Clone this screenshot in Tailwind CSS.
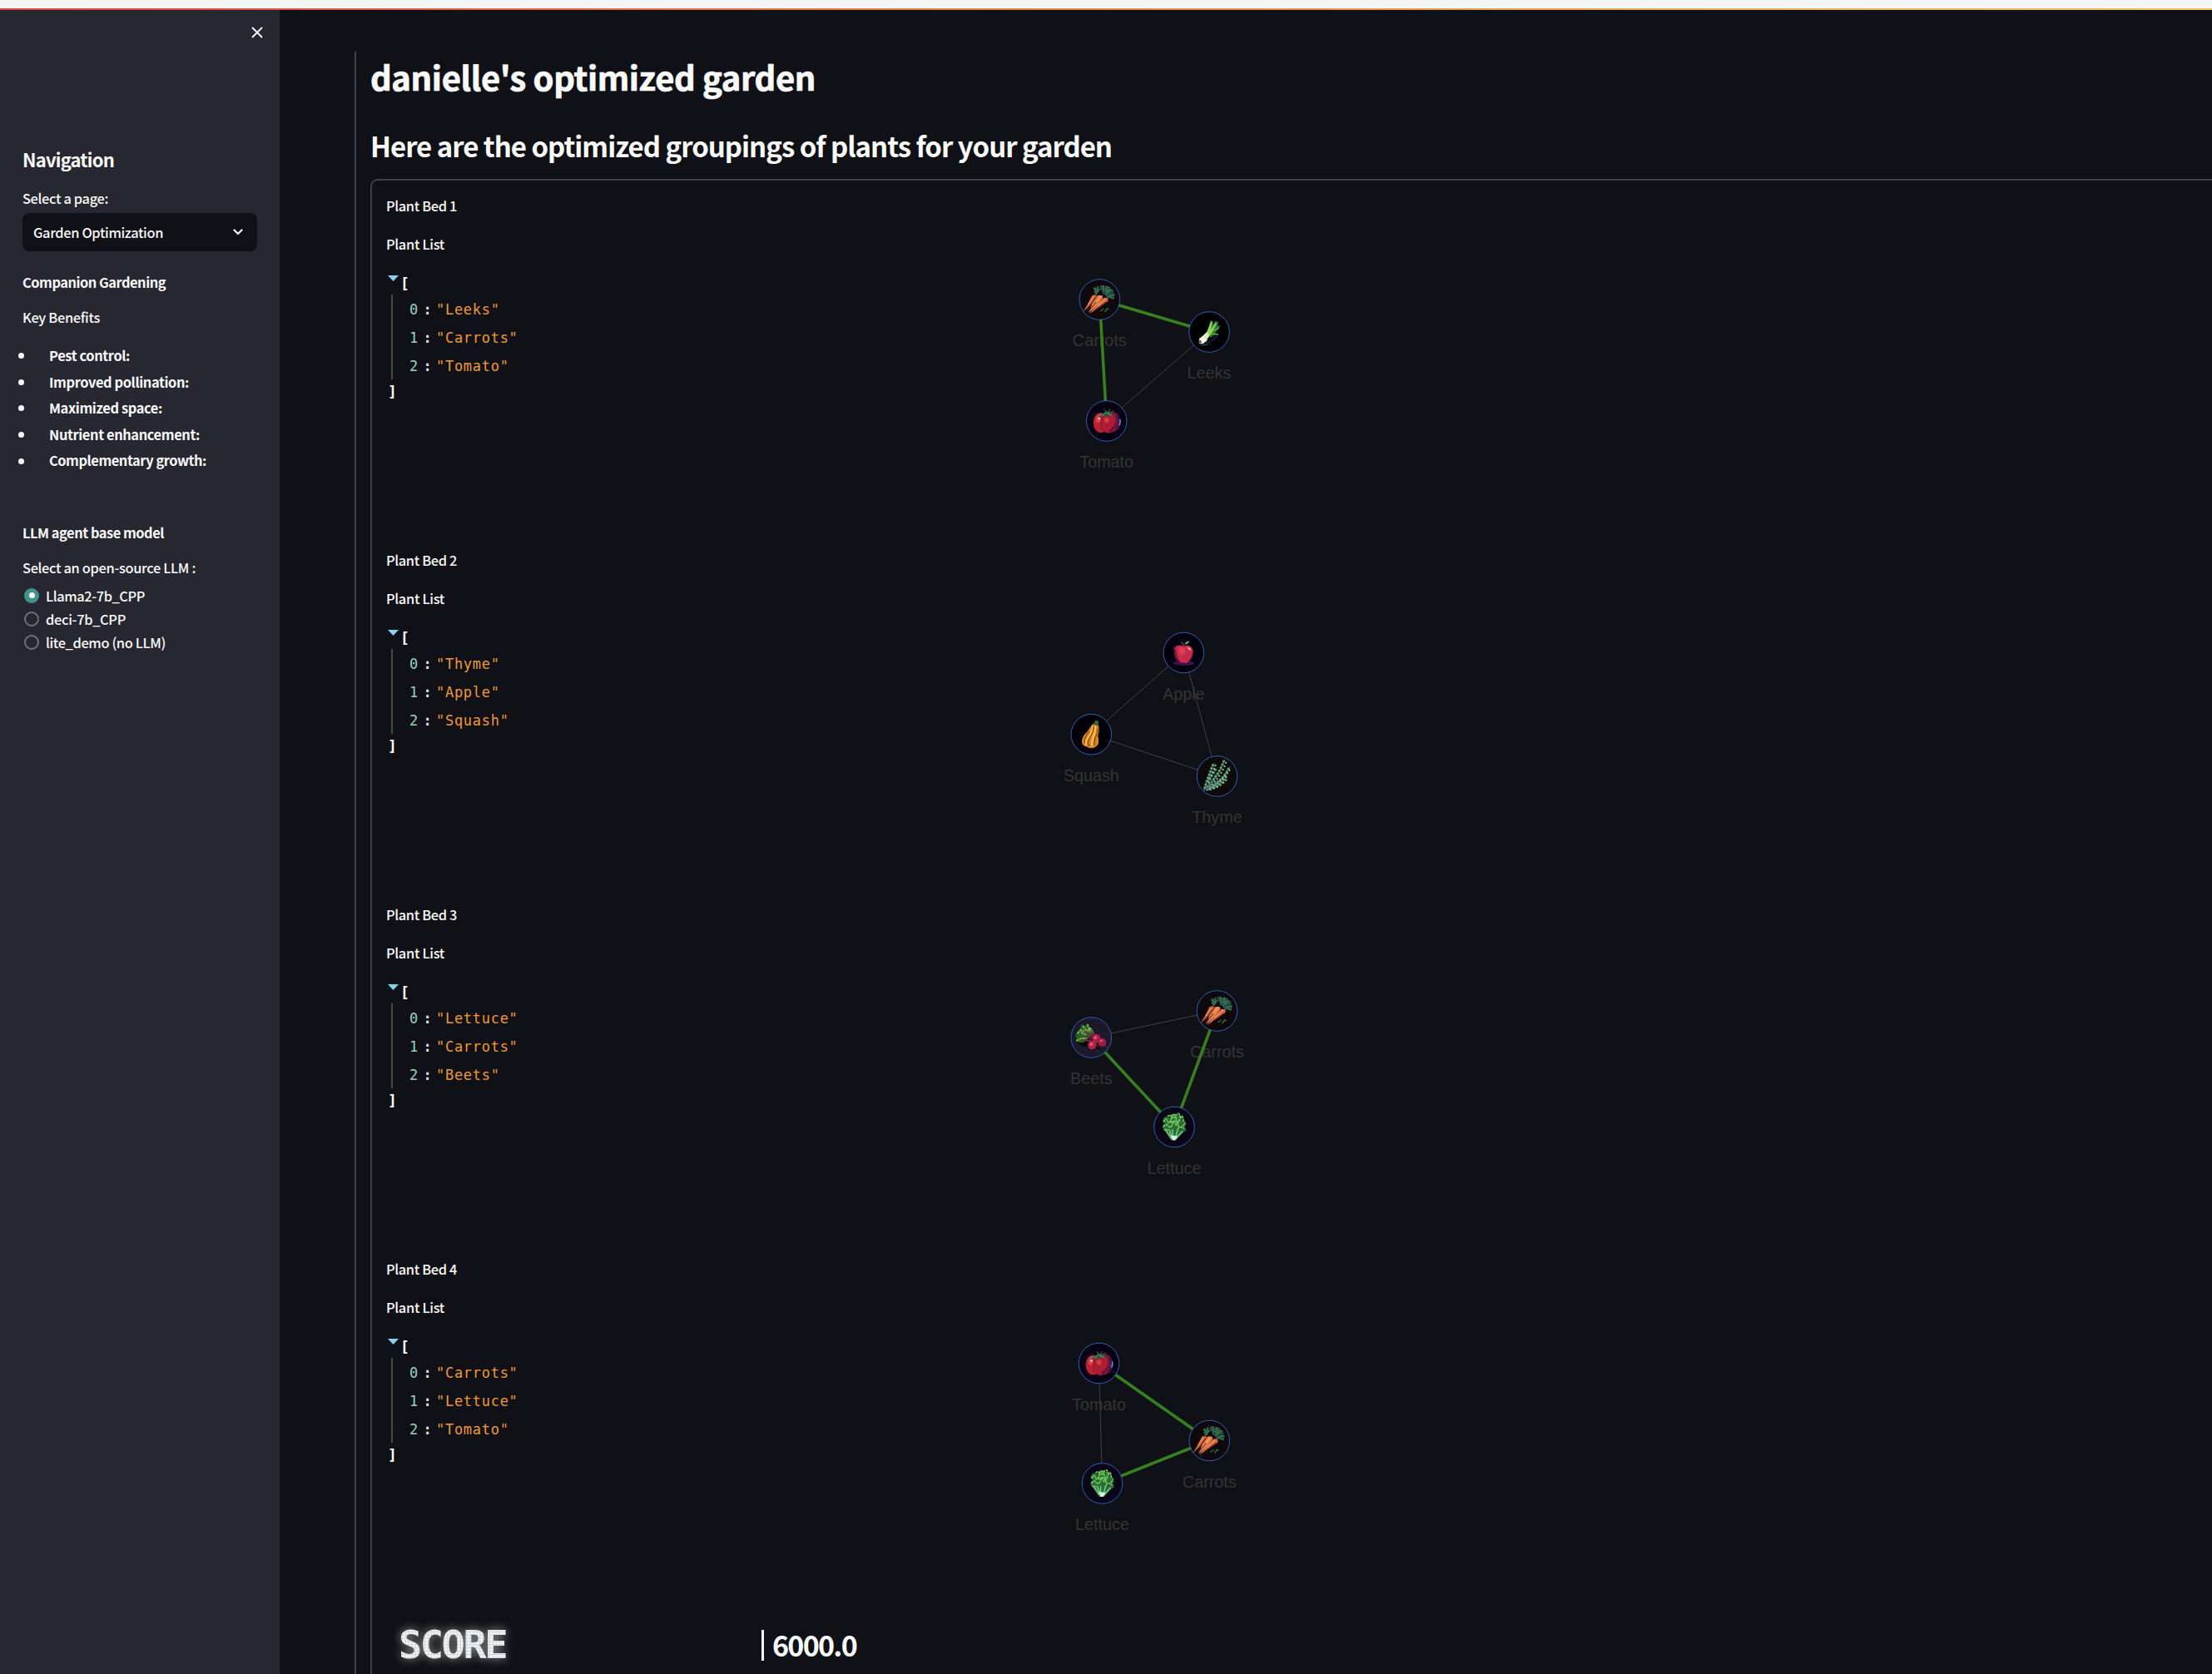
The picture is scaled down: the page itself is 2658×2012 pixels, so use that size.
<!DOCTYPE html>
<html lang="en">
<head>
<meta charset="utf-8">
<title>Companion Gardening</title>
<script src="https://cdn.jsdelivr.net/npm/@tailwindcss/browser@4"></script>
</head>
<body class="h-[2012px] w-[2658px] overflow-hidden bg-[#0f1116] font-['Noto_Sans_CJK_SC',sans-serif] text-[#fafafa]">
<svg class="hidden" aria-hidden="true">
  <defs>
    <symbol id="carrots" viewBox="-25 -25 50 50" overflow="visible">
      <circle r="24" fill="#0f080d"/>
      <g fill="#1f4b40"><circle cx="-4" cy="-12" r="3"/><circle cx="3" cy="-14" r="3.200"/><circle cx="8" cy="-13" r="3.500"/><circle cx="13" cy="-9" r="4"/><circle cx="15" cy="-4" r="3"/><circle cx="6" cy="-9" r="3"/><circle cx="10" cy="-5" r="3"/><circle cx="-4" cy="-8" r="2"/></g>
      <path d="M-7-14l4 4M-2-16l0 7M4-17l1 8M9-16l-2 7M14-12l-7 6M18-6l-8 2M17-1l-6-2M0-12l-4 5M12-15l-3 6M-6-10l3 4" stroke="#55935f" stroke-width="1.400" stroke-dasharray="1.500 1"/>
      <path d="M-9-5l4-1 2 2-6 9-11 10 6-10z" fill="#c95e38"/><path d="M-2-5l5 0 1 3-7 9-10 9 4-11z" fill="#ea8149"/><path d="M5-2l5 0 0 4-8 6-14 9 7-9z" fill="#d96a3e"/>
      <path d="M1-4l-9 12M7-1l-10 9M-7-4l-7 10" stroke="#ffb078" stroke-width="1"/>
      <path d="M-4 3l-10 12M8 3l-14 10M-4-3l-8 11" stroke="#3b1730" stroke-width="1"/>
      <path d="M1 14l4-3M6 15l3-4 2 1" stroke="#2e6a3a" stroke-width="1.500" fill="none"/>
      <circle r="24.300" fill="none" stroke="#2b5fb4"/>
    </symbol>
    <symbol id="leeks" viewBox="-25 -25 50 50" overflow="visible">
      <circle r="24" fill="#000002"/>
      <path d="M-8 14l9-3 8-7 4-2-6 7-8 5z" fill="#161a40"/>
      <path d="M-1-2l2-11 3-1 1 6 3-5 3 1-1 5 3-1-1 4-3 3-3 5-5 3z" fill="#2c6e35"/>
      <path d="M-5 5l7-17 2 0-2 9 5-8 2 1-5 10-5 7z" fill="#8fd255"/>
      <path d="M3 0l8-5M2 2l9 1M4-5l4-7" stroke="#5cac4a" stroke-width="1.300"/>
      <path d="M-12 8l5-4 4-4 3 3-3 8-5 3-4-2z" fill="#dfe9bd"/>
      <path d="M-12 8l5-2 3 3-3 5-4 0z" fill="#fbf6ec"/><path d="M-13 10l3 0 1 3-3 1z" fill="#74544a"/><path d="M-13 13l5 3 6-1" stroke="#2d679b" fill="none"/>
      <circle r="24.300" fill="none" stroke="#2b5fb4"/>
    </symbol>
    <symbol id="tomato" viewBox="-25 -25 50 50" overflow="visible">
      <circle r="24" fill="#060012"/>
      <ellipse cx="6" cy="1" rx="10.500" ry="12.500" fill="#7a1633"/><path d="M13-7q5 9-1 18" stroke="#38154a" stroke-width="3" fill="none"/>
      <ellipse cx="-7" cy="2" rx="9" ry="12" fill="#b92235"/><ellipse cx="2" cy="2" rx="9.500" ry="12.500" fill="#ad1e36"/>
      <path d="M3 14q10-4 8-15-1 8-8 12z" fill="#5f1134"/><path d="M-6 11q-2-9 1-16" stroke="#8a182f" fill="none"/>
      <ellipse cx="-10" cy="-2" rx="3" ry="4" fill="#d84444"/><circle cx="-9" cy="-3" r="1.200" fill="#ffd9cc"/><ellipse cx="0" cy="-1" rx="3" ry="3" fill="#d43d40"/>
      <path d="M16-2q1 4-1 7" stroke="#6a91d8" stroke-width="1.500" fill="none"/>
      <path d="M-13-12l7 3 5-1-3-6 5 5 4-5-2 6 7-4-5 5 6 3-8-1-5 2-2-2-7 3 5-5z" fill="#285a42"/><path d="M-1-11l-4 5M0-10l6 3M-6-8l-5 2" stroke="#68a277"/>
      <circle r="24.300" fill="none" stroke="#2b5fb4"/>
    </symbol>
    <symbol id="apple" viewBox="-25 -25 50 50" overflow="visible">
      <circle r="24" fill="#02000f"/>
      <ellipse cx="0" cy="12.500" rx="13" ry="3" fill="#38124b"/>
      <path d="M0-8q6-3 10 2 3 6-1 13-4 7-9 5-5 1-9-5-4-8-2-13 4-5 11-2z" fill="#c9294a"/>
      <path d="M-11-4q-2 8 4 15l5 2q-8-8-7-18z" fill="#6c1542"/><path d="M10-4q2 9-7 14 6 0 8-9z" fill="#a41f49"/>
      <path d="M3-6l5 0 1 4-4-3z" fill="#ffb3a0"/><ellipse cx="-2" cy="-2" rx="4" ry="5" fill="#dc3d50"/>
      <path d="M0-7q0-4-3-6" stroke="#7b3045" stroke-width="1.500" fill="none"/><path d="M1-10q1-4 6-4-1 4-6 4z" fill="#58a45b"/>
      <circle r="24.300" fill="none" stroke="#2b5fb4"/>
    </symbol>
    <symbol id="squash" viewBox="-25 -25 50 50" overflow="visible">
      <circle r="24" fill="#010006"/>
      <path d="M1-12q6-3 8 2 1 6-1 12 3 10-3 13-5 3-10 0-8-2-6-9 1-5 6-9z" fill="#d88427"/>
      <path d="M2-10q-1 8-6 14-4 5-2 9M5-11q0 9-3 15-2 6-1 10" stroke="#ffc253" stroke-width="2" fill="none"/>
      <path d="M3-10q0 7-5 14-3 5-1 10M8-7q0 6-3 11-2 6-1 9M-2-4q-7 7-6 15" stroke="#773914" fill="none"/>
      <path d="M2-12l3-5 4 1-1 6z" fill="#42612e"/>
      <circle r="24.300" fill="none" stroke="#2b5fb4"/>
    </symbol>
    <symbol id="thyme" viewBox="-25 -25 50 50" overflow="visible">
      <circle r="24" fill="#0c0b09"/>
      <path d="M-16 18Q-9-1-3-16M-14 17Q2 0 9-19M-14 17Q6 8 16-12M-14 17Q3 13 12 1M-14 17l13-20" fill="none" stroke="#294b46" stroke-width="1.500"/>
      <g fill="none" stroke="#5f9d78" stroke-width="3.200" stroke-linecap="round" stroke-dasharray="0.100 4"><path d="M-15 14Q-10-2-4-16M-12 13Q1 0 8-18M-10 13Q7 6 15-12M-9 15Q4 11 11 0M-11 6l9-14"/></g>
      <g fill="none" stroke="#8fc79a" stroke-width="2.200" stroke-linecap="round" stroke-dasharray="0.100 4.300"><path d="M-11 12Q-7-2-1-15M-12 16Q4 2 11-17M-8 13Q9 4 17-11M-8 16Q6 12 13 2"/></g>
      <path d="M-16 18l10-12M-15 17l15-10" stroke="#324166"/>
      <circle r="24.300" fill="none" stroke="#2b5fb4"/>
    </symbol>
    <symbol id="beets" viewBox="-25 -25 50 50" overflow="visible">
      <circle r="24" fill="#1d192b"/>
      <path d="M-17 5q4 6 12 6l8 4 8-1-14-9z" fill="#08070f"/>
      <path d="M-19-3l4-6 3-4 0-3 5 2 4-2 1 4 4 2 2 6-4 2-5 3-4 5-6 0-2-3z" fill="#28602d"/>
      <path d="M-17-5l5-4 5 2M-10-14l4 6 4-1M-5-16l3 7 4 3M-18 4l6-3 7 0M-12-6l6 3M-1-12l0 6" stroke="#75b84a" stroke-width="2" stroke-dasharray="3 1" fill="none"/>
      <path d="M-9-9l11 9M-11 3l10 1M-1-8l5 6M-7-3l7 5" stroke="#8e2447" stroke-width="1.300"/>
      <circle cx="6" cy="1" r="5.200" fill="#a81e48"/><circle cx="13" cy="6" r="5" fill="#9b1d42"/><circle cx="1" cy="9" r="5.200" fill="#b52047"/>
      <circle cx="5" cy="0" r="2" fill="#e7587b"/><circle cx="12" cy="4" r="1.800" fill="#de4b6e"/><circle cx="0" cy="8" r="2" fill="#e7587b"/><path d="M4 13l5 4M16 10l4 3" stroke="#702340"/>
      <circle r="24.300" fill="none" stroke="#2b5fb4"/>
    </symbol>
    <symbol id="lettuce" viewBox="-25 -25 50 50" overflow="visible">
      <circle r="24" fill="#0a0617"/>
      <g fill="#2a6f3a"><circle cx="-9" cy="-8" r="4.500"/><circle cx="-2" cy="-12" r="3.500"/><circle cx="5" cy="-10" r="4.500"/><circle cx="10" cy="-4" r="4"/><circle cx="11" cy="3" r="3"/><circle cx="-10" cy="0" r="4"/><circle cx="0" cy="-3" r="8"/><path d="M-13 2l9 14 6 0 12-13z"/></g>
      <path d="M-10 4l7 10M-6 3l4 12M-2 3l0 12M4 3l-3 12M10 5l-9 10" stroke="#7fcf88" stroke-width="1.400"/><path d="M-4 10l2 6 3 0 3-5z" fill="#d4f5e2"/>
      <path d="M-13-6q3-6 5-1t5-4 5 0 5 1 4 4M-13 0q3-5 6-1t5-3 6 1 9-2M-8-13q4-2 5 1t5-2 5 2M-5-5q4-4 6 1t5-4M4 3q4-5 8-1M-12 4q3-2 5 0" fill="none" stroke="#79cd5c" stroke-width="1.700" stroke-dasharray="3 .8"/>
      <circle r="24.300" fill="none" stroke="#2b5fb4"/>
    </symbol>
  </defs>
</svg>

<div class="h-2.5 bg-[#f4f6f5]"></div>
<div class="h-0.5 bg-linear-to-r from-[#dc4539] via-[#e28853] to-[#edc561]"></div>
<div class="flex h-[2000px]">
  <aside class="w-[336px] shrink-0 bg-[#262730] px-[27px] pt-[19px] text-[16.4px] leading-[28px] font-medium">
    <div class="flex h-[16px] justify-end pr-0">
      <svg class="mr-[-8px] h-4 w-4" viewBox="0 0 16 16" fill="none" stroke="#fafafa" stroke-width="1.800" stroke-linecap="round"><path d="M2.500 2.500l11 11M13.500 2.500l-11 11"/></svg>
    </div>
    <h2 class="mt-[127px] text-[22px] leading-[34px] font-bold"><span class="fit" data-w="110">Navigation</span></h2>
    <p class="mt-[16px]"><span class="fit" data-w="103">Select a page:</span></p>
    <div class="mt-[4px] flex h-[46px] items-center justify-between rounded-lg bg-[#0f1116] pr-[17px] pl-[13px]">
      <span><span class="fit" data-w="156">Garden Optimization</span></span>
      <svg class="h-3 w-3" viewBox="0 0 12 12" fill="none" stroke="#fafafa" stroke-width="2.200" stroke-linecap="round" stroke-linejoin="round"><path d="M1.500 3.500L6 8l4.500-4.500"/></svg>
    </div>
    <p class="mt-[23px] font-bold"><span class="fit" data-w="172">Companion Gardening</span></p>
    <p class="mt-[14px]"><span class="fit" data-w="93">Key Benefits</span></p>
    <ul class="mt-[17px] -ml-[5px] font-bold leading-[31.6px]">
      <li class="flex items-center"><i class="mr-[30px] h-[7px] w-[7px] rounded-full bg-[#fafafa]"></i><span class="fit" data-w="97">Pest control:</span></li>
      <li class="flex items-center"><i class="mr-[30px] h-[7px] w-[7px] rounded-full bg-[#fafafa]"></i><span class="fit" data-w="168">Improved pollination:</span></li>
      <li class="flex items-center"><i class="mr-[30px] h-[7px] w-[7px] rounded-full bg-[#fafafa]"></i><span class="fit" data-w="136">Maximized space:</span></li>
      <li class="flex items-center"><i class="mr-[30px] h-[7px] w-[7px] rounded-full bg-[#fafafa]"></i><span class="fit" data-w="181">Nutrient enhancement:</span></li>
      <li class="flex items-center"><i class="mr-[30px] h-[7px] w-[7px] rounded-full bg-[#fafafa]"></i><span class="fit" data-w="189">Complementary growth:</span></li>
    </ul>
    <p class="mt-[56px] font-bold"><span class="fit" data-w="170">LLM agent base model</span></p>
    <p class="mt-[14px]"><span class="fit" data-w="208">Select an open-source LLM :</span></p>
    <div class="mt-[6px] ml-[2px]">
      <div class="flex h-[28px] items-center"><i class="mr-2 flex h-[18px] w-[18px] items-center justify-center rounded-full bg-[#43928e]"><b class="h-[7px] w-[7px] rounded-full bg-[#fafafa]"></b></i><span class="fit" data-w="119">Llama2-7b_CPP</span></div>
      <div class="flex h-[28px] items-center"><i class="mr-2 h-[18px] w-[18px] rounded-full border-2 border-[#707176]"></i><span class="fit" data-w="96">deci-7b_CPP</span></div>
      <div class="flex h-[28px] items-center"><i class="mr-2 h-[18px] w-[18px] rounded-full border-2 border-[#707176]"></i><span class="fit" data-w="144">lite_demo (no LLM)</span></div>
    </div>
  </aside>

  <main class="flex-1 pt-[50px] pl-[90px]">
    <div class="h-[1950px] border-l-2 border-[#3f4045] pl-[17px]">
      <h1 class="pt-[1px] text-[40px] leading-[58px] font-bold [-webkit-text-stroke:0.7px_#fafafa]"><span class="fit" data-w="535">danielle's optimized garden</span></h1>
      <h2 class="mt-[30px] text-[33px] leading-[48px] font-bold"><span class="fit" data-w="891">Here are the optimized groupings of plants for your garden</span></h2>
      <div id="beds" class="mt-[16px] h-[1800px] rounded-tl-[9px] border-t-2 border-l-2 border-[#3f4045] pl-[17px]">
      </div>
    </div>
  </main>
</div>

<template id="bed">
  <section class="flex h-[426px] text-[16.4px] leading-[28px]">
    <div class="w-[800px] pt-[16px]">
      <p class="font-medium"><span class="fit title" data-w="85"></span></p>
      <p class="mt-[18px] font-medium"><span class="fit" data-w="70">Plant List</span></p>
      <div class="mt-[18px] font-['DejaVu_Sans_Mono',monospace] text-[17px]">
        <div class="flex h-[29px]">
          <svg class="mt-[6px] ml-[2px] h-[7px] w-[13px]" viewBox="0 0 13 7"><path d="M0 0h13L6.500 7z" fill="#82d3ee"/></svg>
          <span class="mt-[2px] ml-[2px] text-[18px] font-bold">[</span>
        </div>
        <div class="rows ml-[6px] flex h-[102px] flex-col border-l-2 border-[#49483e] pl-[20px]"></div>
        <div class="ml-[2px] text-[18px] leading-[29px] font-bold">]</div>
      </div>
    </div>
    <svg class="graph h-[426px] w-[280px] overflow-visible"></svg>
  </section>
</template>
<template id="row">
  <div class="flex h-[34px] items-center pt-[2px]">
    <span class="idx w-[11px] text-[#97d1c4]"></span><span class="mr-[5px] ml-[5px] w-[11px] text-center font-bold text-[#e0e0e0]">:</span><span class="val fit text-[#f0983a]"></span>
  </div>
</template>
<template id="score">
  <div class="flex items-center pl-[15px] pt-[32px]">
    <div class="w-[436px]"><span class="fit inline-block bg-[#f4f8fb] bg-[linear-gradient(to_right,#cdd5da_1px,transparent_1px),linear-gradient(#cdd5da_1px,transparent_1px)] bg-[length:3.9px_3.9px] bg-clip-text font-['DejaVu_Sans_Mono',monospace] text-[47px] leading-[48px] font-bold text-transparent drop-shadow-[0_0_6px_#ffffff90]" data-w="129">SCORE</span></div>
    <div class="h-[37px] w-[3px] bg-[#fafafa]"></div>
    <div class="mt-[-1px] ml-[10px] text-[34px] leading-[48px] font-bold"><span class="fit" data-w="101">6000.0</span></div>
  </div>
</template>

<script>
const beds = [
  { list: ['Leeks', 'Carrots', 'Tomato'], nodes: [['carrots', 1321.3, 360], ['leeks', 1453, 399], ['tomato', 1329.7, 506]], edges: [[0, 1, 1], [0, 2, 1], [1, 2, 0]] },
  { list: ['Thyme', 'Apple', 'Squash'], nodes: [['apple', 1422.3, 784.500], ['squash', 1311.3, 882.700], ['thyme', 1462.500, 933]], edges: [[0, 1, 0], [0, 2, 0], [1, 2, 0]] },
  { list: ['Lettuce', 'Carrots', 'Beets'], nodes: [['carrots', 1462.500, 1215], ['beets', 1311.3, 1247], ['lettuce', 1411, 1354.500]], edges: [[0, 1, 0], [0, 2, 1], [1, 2, 1]] },
  { list: ['Carrots', 'Lettuce', 'Tomato'], nodes: [['tomato', 1320.500, 1638.500], ['carrots', 1453.300, 1731.500], ['lettuce', 1324.500, 1783]], edges: [[0, 1, 1], [1, 2, 1], [0, 2, 0]] }
];
const host = document.getElementById('beds');
const clone = id => document.getElementById(id).content.cloneNode(true);
beds.forEach((bed, i) => {
  const f = clone('bed');
  f.querySelector('.title').textContent = 'Plant Bed ' + (i + 1);
  bed.list.forEach((name, j) => {
    const r = clone('row');
    r.querySelector('.idx').textContent = j;
    const v = r.querySelector('.val');
    v.textContent = '"' + name + '"';
    v.dataset.w = (name.length + 2) * 10.95;
    f.querySelector('.rows').append(r);
  });
  const g = f.querySelector('.graph');
  const ox = 1264, oy = 217 + 426 * i;
  const n = bed.nodes.map(([k, x, y]) => [k, x - ox, y - oy]);
  const label = k => k[0].toUpperCase() + k.slice(1);
  g.innerHTML =
    n.map(([k, x, y]) => `<text x="${x}" y="${y + 56.300}" text-anchor="middle" font-family="Liberation Sans, sans-serif" font-size="19.800" fill="#343434">${label(k)}</text>`).join('') +
    bed.edges.map(([a, b, ok]) => `<line x1="${n[a][1]}" y1="${n[a][2]}" x2="${n[b][1]}" y2="${n[b][2]}" stroke="${ok ? '#36801f' : '#404143'}" stroke-width="${ok ? 3.6 : 1}"/>`).join('') +
    n.map(([k, x, y]) => `<use href="#${k}" x="${x - 25}" y="${y - 25}" width="50" height="50"/>`).join('');
  host.append(f);
});
host.append(clone('score'));
// Track each label to its design width once the stylesheet and fonts are in.
const fit = () => document.querySelectorAll('.fit').forEach(e => {
  e.style.whiteSpace = 'nowrap';
  e.style.letterSpacing = '0px';
  const w = e.getBoundingClientRect().width;
  e.style.letterSpacing = (e.dataset.w - w) / e.textContent.length + 'px';
});
addEventListener('load', () => { fit(); requestAnimationFrame(fit); document.fonts.ready.then(fit); });
</script>
</body>
</html>
